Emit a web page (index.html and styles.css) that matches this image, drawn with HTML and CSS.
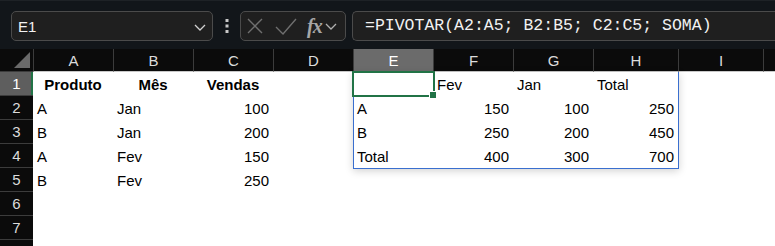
FILE: index.html
```html
<!DOCTYPE html>
<html lang="pt">
<head>
    <meta charset="UTF-8">
    <title>Planilha - PIVOTAR</title>
    <link rel="stylesheet" href="styles.css">
</head>
<body>
    <div class="toolbar">
        <div class="namebox">
            <span>E1</span>
            <svg class="chev" width="12" height="7" viewBox="0 0 12 7"><path d="M1 1 L6 6 L11 1" fill="none" stroke="#d0d0d0" stroke-width="1.3"/></svg>
        </div>
        <div class="dots">
            <svg width="4" height="14" viewBox="0 0 4 14"><rect x="0.5" y="0" width="3" height="3" fill="#c8c8c8"/><rect x="0.5" y="5.5" width="3" height="3" fill="#c8c8c8"/><rect x="0.5" y="11" width="3" height="3" fill="#c8c8c8"/></svg>
        </div>
        <div class="fxbox">
            <svg width="16" height="16" viewBox="0 0 16 16"><path d="M1 1 L15 15 M15 1 L1 15" stroke="#6f6f6f" stroke-width="1.4"/></svg>
            <svg width="22" height="17" viewBox="0 0 22 17"><path d="M1 9 L8 16 L21 1" fill="none" stroke="#6f6f6f" stroke-width="1.4"/></svg>
            <span class="fx">fx</span>
            <svg width="12" height="7" viewBox="0 0 12 7"><path d="M1 1 L6 6 L11 1" fill="none" stroke="#b0b0b0" stroke-width="1.3"/></svg>
        </div>
        <div class="formula">=PIVOTAR(A2:A5; B2:B5; C2:C5; SOMA)</div>
    </div>

    <div class="sheet">
        <div class="corner"></div>
        <div class="ch">A</div><div class="ch">B</div><div class="ch">C</div><div class="ch">D</div>
        <div class="ch sel">E</div><div class="ch">F</div><div class="ch">G</div><div class="ch">H</div>
        <div class="ch">I</div><div class="ch"></div>

        <div class="rh sel">1</div>
        <div class="c hd">Produto</div><div class="c hd">Mês</div><div class="c hd">Vendas</div><div class="c"></div>
        <div class="c"></div><div class="c">Fev</div><div class="c">Jan</div><div class="c">Total</div>
        <div class="c"></div><div class="c"></div>

        <div class="rh">2</div>
        <div class="c">A</div><div class="c">Jan</div><div class="c num">100</div><div class="c"></div>
        <div class="c">A</div><div class="c num">150</div><div class="c num">100</div><div class="c num">250</div>
        <div class="c"></div><div class="c"></div>

        <div class="rh">3</div>
        <div class="c">B</div><div class="c">Jan</div><div class="c num">200</div><div class="c"></div>
        <div class="c">B</div><div class="c num">250</div><div class="c num">200</div><div class="c num">450</div>
        <div class="c"></div><div class="c"></div>

        <div class="rh">4</div>
        <div class="c">A</div><div class="c">Fev</div><div class="c num">150</div><div class="c"></div>
        <div class="c">Total</div><div class="c num">400</div><div class="c num">300</div><div class="c num">700</div>
        <div class="c"></div><div class="c"></div>

        <div class="rh">5</div>
        <div class="c">B</div><div class="c">Fev</div><div class="c num">250</div><div class="c"></div>
        <div class="c"></div><div class="c"></div><div class="c"></div><div class="c"></div>
        <div class="c"></div><div class="c"></div>

        <div class="rh">6</div>
        <div class="c"></div><div class="c"></div><div class="c"></div><div class="c"></div><div class="c"></div>
        <div class="c"></div><div class="c"></div><div class="c"></div><div class="c"></div><div class="c"></div>

        <div class="rh">7</div>
        <div class="c"></div><div class="c"></div><div class="c"></div><div class="c"></div><div class="c"></div>
        <div class="c"></div><div class="c"></div><div class="c"></div><div class="c"></div><div class="c"></div>

        <!-- row 8 is only partly visible, its number falls below the frame -->
        <div class="rh"></div>
        <div class="c"></div><div class="c"></div><div class="c"></div><div class="c"></div><div class="c"></div>
        <div class="c"></div><div class="c"></div><div class="c"></div><div class="c"></div><div class="c"></div>

        <!-- spill range E1:H4 and active cell -->
        <div class="spill"></div>
        <div class="selection"><div class="handle"></div></div>
    </div>
</body>
</html>
```

FILE: styles.css
```css
body {
    margin: 0;
    background-color: #fff;
    font-family: "Liberation Sans", Arial, sans-serif;
    overflow: hidden;
}
.toolbar {
    height: 49px;
    box-sizing: border-box;
    background-color: #12161a;
    border-top: 1px solid #1e2226;
    padding: 10px 0 0 11px;
    display: flex;
    align-items: flex-start;
    overflow: hidden;
}
.namebox {
    width: 202px;
    height: 30px;
    box-sizing: border-box;
    background-color: #1f1f1f;
    border: 1px solid #4b4b4b;
    border-radius: 5px;
    display: flex;
    align-items: center;
    justify-content: space-between;
    padding: 0 6px 0 6px;
    color: #f2f2f2;
    font-size: 15px;
}
.namebox .chev {
    margin-top: 2px;
}
.dots {
    width: 27px;
    height: 30px;
    display: flex;
    align-items: center;
    justify-content: center;
}
.fxbox {
    width: 106px;
    height: 30px;
    box-sizing: border-box;
    background-color: #1f1f1f;
    border: 1px solid #4b4b4b;
    border-radius: 5px;
    display: flex;
    align-items: center;
    padding: 0 4px 0 6px;
}
.fxbox svg:nth-child(2) {
    margin-left: 12px;
}
.fx {
    font-family: "Liberation Serif", serif;
    font-style: italic;
    font-weight: bold;
    font-size: 20px;
    color: #a6a6a6;
    margin-left: 10px;
    margin-right: 3px;
    letter-spacing: -1px;
}
.formula {
    flex: 1;
    height: 30px;
    box-sizing: border-box;
    margin-left: 6px;
    background-color: #1f1f1f;
    border: 1px solid #4b4b4b;
    border-right: none;
    border-radius: 5px 0 0 5px;
    padding: 0 0 0 12px;
    line-height: 28px;
    color: #f2f2f2;
    font-family: "Liberation Mono", monospace;
    font-size: 16.5px;
    white-space: nowrap;
}
.sheet {
    position: relative;
    display: grid;
    grid-template-columns: 33px repeat(7, 80px) 85px 85px 1fr;
    grid-template-rows: 23px repeat(8, 24px);
    font-size: 15px;
}
.corner {
    background-color: #0b0b0b;
    position: relative;
    border-bottom: 1px solid #3c3c3c;
    box-sizing: border-box;
}
.corner::after {
    content: "";
    position: absolute;
    right: 3px;
    bottom: 3px;
    border-style: solid;
    border-width: 0 0 16px 16px;
    border-color: transparent transparent #6a6a6a transparent;
}
.ch {
    background-color: #0b0b0b;
    color: #dcdcdc;
    border-left: 1px solid #3c3c3c;
    border-bottom: 1px solid #c8c8c8;
    box-sizing: border-box;
    display: flex;
    align-items: center;
    justify-content: center;
}
.ch.sel {
    background-color: #6b6b6b;
    color: #fff;
}
.rh {
    background-color: #0b0b0b;
    color: #dcdcdc;
    border-bottom: 1px solid #3c3c3c;
    box-sizing: border-box;
    display: flex;
    align-items: center;
    justify-content: center;
}
.rh.sel {
    background-color: #5e5e5e;
    color: #fff;
    box-shadow: inset -2px 0 0 #217346;
}
.c {
    color: #000;
    padding: 0 4px;
    display: flex;
    align-items: center;
    white-space: nowrap;
}
.c.num {
    justify-content: flex-end;
}
.c.hd {
    justify-content: center;
    font-weight: bold;
}
.spill {
    position: absolute;
    left: 353px;
    top: 23px;
    width: 326px;
    height: 97px;
    box-sizing: border-box;
    border: 1px solid #3a6fcf;
    border-top: none;
    box-shadow: 0 2px 8px rgba(0, 0, 0, 0.18);
    pointer-events: none;
}
.selection {
    position: absolute;
    left: 352px;
    top: 22px;
    width: 83px;
    height: 26px;
    box-sizing: border-box;
    border: 2px solid #217346;
}
.handle {
    position: absolute;
    right: -4px;
    bottom: -4px;
    width: 6px;
    height: 6px;
    background-color: #217346;
    border: 1px solid #fff;
}
```
